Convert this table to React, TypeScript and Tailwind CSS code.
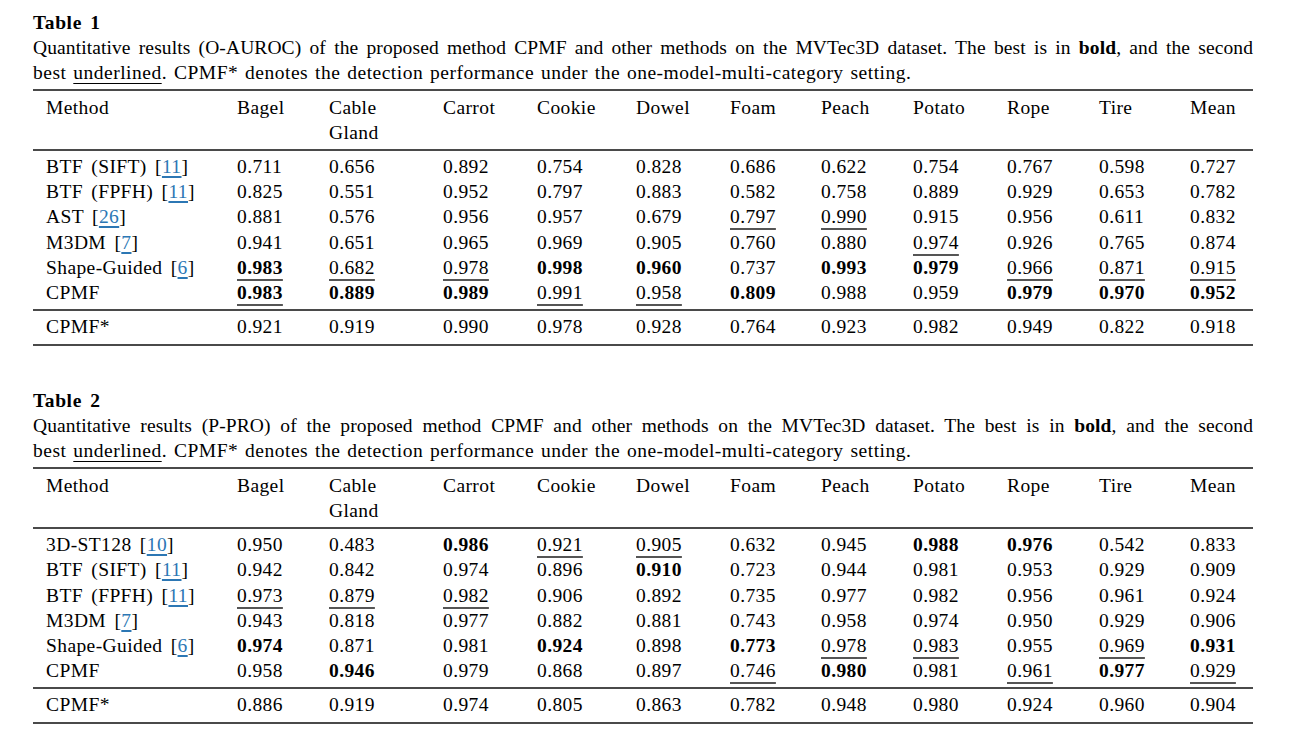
import React from 'react';

const COLS = ['Bagel', 'Cable\nGland', 'Carrot', 'Cookie', 'Dowel', 'Foam', 'Peach', 'Potato', 'Rope', 'Tire', 'Mean'];

type Row = { name: string; ref?: string; cells: string[] };

// cell prefix: b = best (bold), u = second best (underline)
const table1: Row[] = [
  { name: 'BTF (SIFT)', ref: '11', cells: ['0.711', '0.656', '0.892', '0.754', '0.828', '0.686', '0.622', '0.754', '0.767', '0.598', '0.727'] },
  { name: 'BTF (FPFH)', ref: '11', cells: ['0.825', '0.551', '0.952', '0.797', '0.883', '0.582', '0.758', '0.889', '0.929', '0.653', '0.782'] },
  { name: 'AST', ref: '26', cells: ['0.881', '0.576', '0.956', '0.957', '0.679', 'u0.797', 'u0.990', '0.915', '0.956', '0.611', '0.832'] },
  { name: 'M3DM', ref: '7', cells: ['0.941', '0.651', '0.965', '0.969', '0.905', '0.760', '0.880', 'u0.974', '0.926', '0.765', '0.874'] },
  { name: 'Shape-Guided', ref: '6', cells: ['bu0.983', 'u0.682', 'u0.978', 'b0.998', 'b0.960', '0.737', 'b0.993', 'b0.979', 'u0.966', 'u0.871', 'u0.915'] },
  { name: 'CPMF', cells: ['bu0.983', 'b0.889', 'b0.989', 'u0.991', 'u0.958', 'b0.809', '0.988', '0.959', 'b0.979', 'b0.970', 'b0.952'] },
];
const star1 = ['0.921', '0.919', '0.990', '0.978', '0.928', '0.764', '0.923', '0.982', '0.949', '0.822', '0.918'];

const table2: Row[] = [
  { name: '3D-ST128', ref: '10', cells: ['0.950', '0.483', 'b0.986', 'u0.921', 'u0.905', '0.632', '0.945', 'b0.988', 'b0.976', '0.542', '0.833'] },
  { name: 'BTF (SIFT)', ref: '11', cells: ['0.942', '0.842', '0.974', '0.896', 'b0.910', '0.723', '0.944', '0.981', '0.953', '0.929', '0.909'] },
  { name: 'BTF (FPFH)', ref: '11', cells: ['u0.973', 'u0.879', 'u0.982', '0.906', '0.892', '0.735', '0.977', '0.982', '0.956', '0.961', '0.924'] },
  { name: 'M3DM', ref: '7', cells: ['0.943', '0.818', '0.977', '0.882', '0.881', '0.743', '0.958', '0.974', '0.950', '0.929', '0.906'] },
  { name: 'Shape-Guided', ref: '6', cells: ['b0.974', '0.871', '0.981', 'b0.924', '0.898', 'b0.773', 'u0.978', 'u0.983', '0.955', 'u0.969', 'b0.931'] },
  { name: 'CPMF', cells: ['0.958', 'b0.946', '0.979', '0.868', '0.897', 'u0.746', 'b0.980', '0.981', 'u0.961', 'b0.977', 'u0.929'] },
];
const star2 = ['0.886', '0.919', '0.974', '0.805', '0.863', '0.782', '0.948', '0.980', '0.924', '0.960', '0.904'];

const GRID = 'grid grid-cols-[191px_92px_114px_94px_99px_94px_91px_92px_94px_92px_91px_76px]';

function Cell({ raw }: { raw: string }) {
  const m = raw.match(/^([bu]*)(.*)$/)!;
  const bold = m[1].includes('b');
  const under = m[1].includes('u');
  return (
    <div className="pl-[13px]">
      <span
        className={
          (bold ? 'font-bold ' : '') +
          (under ? 'underline decoration-2 decoration-[#555] underline-offset-[5px] [text-decoration-skip-ink:none]' : '')
        }
      >
        {m[2]}
      </span>
    </div>
  );
}

function MethodCell({ name, refNo }: { name: string; refNo?: string }) {
  return (
    <div className="pl-[13px] whitespace-nowrap [word-spacing:3px]">
      {name}
      {refNo && (
        <>
          {' '}
          [<span className="text-[#2c77b4] underline decoration-[1.5px] underline-offset-[3px] [text-decoration-skip-ink:none]">{refNo}</span>]
        </>
      )}
    </div>
  );
}

function DataTable({ title, metric, rows, star }: { title: string; metric: string; rows: Row[]; star: string[] }) {
  return (
    <section>
      <h2 className="font-bold tracking-[0.6px] [word-spacing:3px]">{title}</h2>
      <p className="text-justify [text-align-last:justify] whitespace-nowrap tracking-[0.1px]">
        Quantitative results ({metric}) of the proposed method CPMF and other methods on the MVTec3D dataset. The best is in <b>bold</b>, and the second
      </p>
      <p className="tracking-[0.5px] [word-spacing:1.5px]">
        best <span className="underline decoration-1 underline-offset-[4px]">underlined</span>. CPMF* denotes the detection performance under the one-model-multi-category setting.
      </p>

      <div className="mt-[4px] border-t-2 border-[#4a4a4a] tracking-[0.4px]">
        <div className={`${GRID} pt-[4px] pb-[4px]`}>
          <div className="pl-[13px]">Method</div>
          {COLS.map((c) => (
            <div key={c} className="pl-[13px] whitespace-pre-line">
              {c}
            </div>
          ))}
        </div>
        <div className="border-t-2 border-[#4a4a4a] pt-[3px] pb-[4px]">
          {rows.map((r) => (
            <div key={r.name + (r.ref ?? '')} className={`${GRID} h-[25.2px]`}>
              <MethodCell name={r.name} refNo={r.ref} />
              {r.cells.map((c, i) => (
                <Cell key={i} raw={c} />
              ))}
            </div>
          ))}
        </div>
        <div className={`${GRID} border-t-2 border-b-2 border-[#4a4a4a] pt-[3px] pb-[5px]`}>
          <div className="pl-[13px]">CPMF*</div>
          {star.map((c, i) => (
            <Cell key={i} raw={c} />
          ))}
        </div>
      </div>
    </section>
  );
}

export default function App() {
  return (
    <div className="w-[1290px] h-[735px] bg-white text-black overflow-hidden font-['Liberation_Serif',serif] text-[19.5px] leading-[25px]">
      <div className="w-[1220px] ml-[33px] pt-[10px] flex flex-col gap-[42px]">
        <DataTable title="Table 1" metric="O-AUROC" rows={table1} star={star1} />
        <DataTable title="Table 2" metric="P-PRO" rows={table2} star={star2} />
      </div>
    </div>
  );
}
